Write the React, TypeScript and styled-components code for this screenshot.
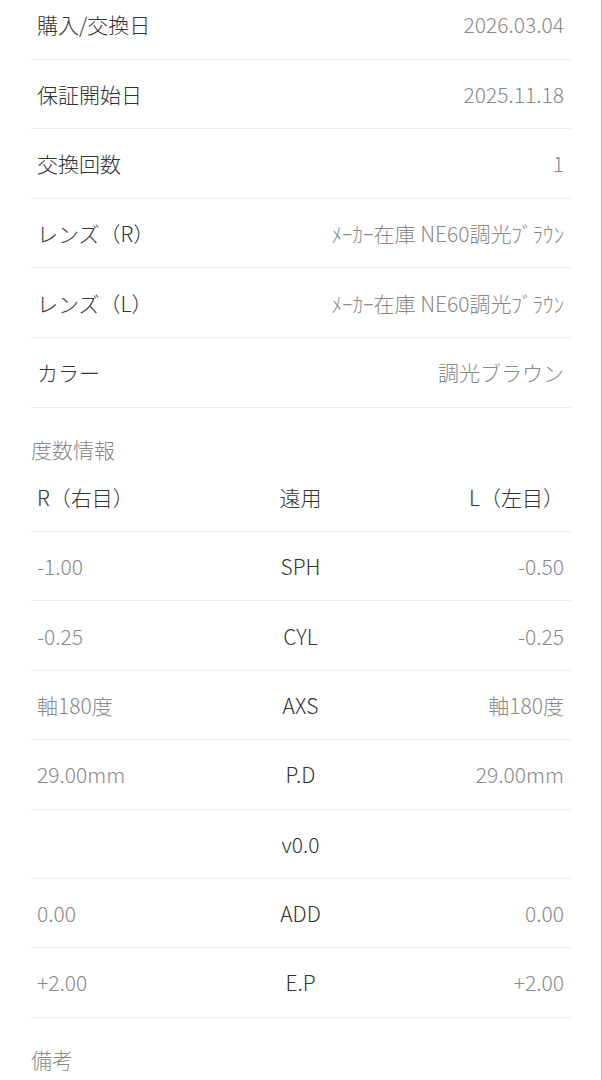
import React from "react";
import styled, { createGlobalStyle } from "styled-components";

const GlobalStyle = createGlobalStyle`
  html, body {
    margin: 0;
    padding: 0;
    background: #ffffff;
  }
  body {
    font-family: "Noto Sans CJK JP", "Noto Sans", sans-serif;
    font-weight: 300;
    overflow: hidden;
  }
`;

type InfoItem = { label: string; value: string };
type PowerItem = { right: string; name: string; left: string };

const infoItems: InfoItem[] = [
  { label: "購入/交換日", value: "2026.03.04" },
  { label: "保証開始日", value: "2025.11.18" },
  { label: "交換回数", value: "1" },
  { label: "レンズ（R）", value: "ﾒｰｶｰ在庫 NE60調光ﾌﾞﾗｳﾝ" },
  { label: "レンズ（L）", value: "ﾒｰｶｰ在庫 NE60調光ﾌﾞﾗｳﾝ" },
  { label: "カラー", value: "調光ブラウン" },
];

const powerItems: PowerItem[] = [
  { right: "-1.00", name: "SPH", left: "-0.50" },
  { right: "-0.25", name: "CYL", left: "-0.25" },
  { right: "軸180度", name: "AXS", left: "軸180度" },
  { right: "29.00mm", name: "P.D", left: "29.00mm" },
  { right: "", name: "v0.0", left: "" },
  { right: "0.00", name: "ADD", left: "0.00" },
  { right: "+2.00", name: "E.P", left: "+2.00" },
];

export default function App() {
  return (
    <>
      <GlobalStyle />
      <Page>
        <Content>
          {infoItems.map((item, index) => (
            <InfoRow key={index}>
              <Label>{item.label}</Label>
              <Value>{item.value}</Value>
            </InfoRow>
          ))}

          <SectionTitle>度数情報</SectionTitle>
          <PowerRow>
            <Cell $align="left" $tone="dark">R（右目）</Cell>
            <Cell $align="center" $tone="dark">遠用</Cell>
            <Cell $align="right" $tone="dark">L（左目）</Cell>
          </PowerRow>
          {powerItems.map((item, index) => (
            <PowerRow key={index}>
              <Cell $align="left" $tone="light">{item.right}</Cell>
              <Cell $align="center" $tone="dark">{item.name}</Cell>
              <Cell $align="right" $tone="light">{item.left}</Cell>
            </PowerRow>
          ))}

          <SectionTitle>備考</SectionTitle>
        </Content>
      </Page>
    </>
  );
}

const Page = styled.div`
  box-sizing: border-box;
  width: 602px;
  height: 1080px;
  overflow: hidden;
  border-right: 1px solid #bdbdbd;
  background: #ffffff;
`;

const Content = styled.div`
  margin: -10px 31px 0 31px;
  width: 540px;
`;

const InfoRow = styled.div`
  box-sizing: border-box;
  height: 69.6px;
  display: flex;
  align-items: center;
  justify-content: space-between;
  padding: 0 7px 0 6px;
  border-bottom: 1px solid #ececec;
  font-size: 21px;
`;

const Label = styled.span`
  color: #333333;
`;

const Value = styled.span`
  color: #888888;
  white-space: nowrap;
`;

const SectionTitle = styled.div`
  padding-top: 27px;
  line-height: 28px;
  font-size: 21px;
  color: #888888;
`;

const PowerRow = styled.div`
  box-sizing: border-box;
  height: 69.4px;
  display: grid;
  grid-template-columns: 1fr 1fr 1fr;
  align-items: center;
  padding: 0 7px 0 6px;
  border-bottom: 1px solid #ececec;
  font-size: 21px;
`;

const Cell = styled.span<{ $align: "left" | "center" | "right"; $tone: "dark" | "light" }>`
  text-align: ${(p) => p.$align};
  color: ${(p) => (p.$tone === "dark" ? "#333333" : "#888888")};
  white-space: nowrap;
`;
